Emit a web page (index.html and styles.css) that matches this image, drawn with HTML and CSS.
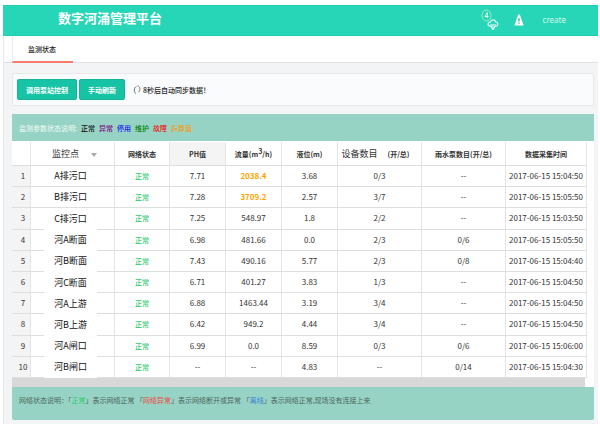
FILE: index.html
```
<!DOCTYPE html>
<html lang="zh-CN">
<head>
<meta charset="utf-8">
<title>数字河涌管理平台</title>
<link rel="stylesheet" href="styles.css">
</head>
<body>
<div class="app">
  <header class="topbar">
    <h1>数字河涌管理平台</h1>
    <nav class="tools">
      <a class="tool" href="#" aria-label="消息 4">
        <svg width="18" height="22" viewBox="0 0 18 22" fill="none">
          <ellipse cx="5.500" cy="6.500" rx="4.500" ry="5.500" stroke="#b5ecc8" stroke-width="0.900"/>
          <path d="M6.300 3.500 3.900 7.500h3.700M6.300 3.500v5.700" stroke="#e6fbf4" stroke-width="0.900"/>
          <path d="M9 17.200c-3-.5-2.300-4 .3-4 .8-3 4.800-3 5.400-.3 3 .4 2.700 4 .3 4.500" stroke="#d8f8ee" stroke-width="1.200"/>
          <path d="M10 15v3M12 15v4.500M14 15v3M9.700 17l2.300 4 2.300-4" stroke="#fff" stroke-width="1"/>
        </svg>
      </a>
      <a class="tool" href="#" aria-label="告警">
        <svg width="10" height="12" viewBox="0 0 10 12">
          <path d="M4.200.5h1.600L9.600 11.500H.4z" fill="#fff"/>
          <path d="M5 4v3.600M5 8.600v1.200" stroke="#24b59b" stroke-width="1.200"/>
        </svg>
      </a>
      <a class="user" href="#">create</a>
    </nav>
  </header>
  <div class="tabs"><a class="tab" href="#">监测状态</a></div>
  <main>
    <section class="panel">
      <button type="button">调用泵站控制</button>
      <button type="button">手动刷新</button>
      <svg class="sync" width="8" height="10" viewBox="0 0 8 10" fill="none" stroke="#777">
        <path d="M3.500 1.500C.5 2.500.8 7.500 3 8.800M4.500.8c3 .8 3 4.200 1 6.500"/>
      </svg>
      <span class="note">8秒后自动同步数据！</span>
    </section>
    <section class="legend">
      <span class="lead">监测参数状态说明:</span>
      <span class="c-normal">正常</span><span class="c-odd">异常</span><span class="c-stop">停用</span><span class="c-fix">维护</span><span class="c-fault">故障</span><span class="c-calc">折算值</span>
    </section>
    <div class="grid">
      <table>
        <colgroup><col class="w-no"><col class="w-name"><col class="w-net"><col class="w-val"><col class="w-val"><col class="w-val"><col class="w-num"><col class="w-num"><col class="w-time"></colgroup>
        <thead>
          <tr><th></th><th class="big point">监控点<i class="sort"></i></th><th>网络状态</th><th class="sorted">PH值</th><th>流量(m<sup>3</sup>/h)</th><th>液位(m)</th><th class="devices"><span class="big">设备数目</span><span class="unit">(开/总)</span></th><th>雨水泵数目(开/总)</th><th>数据采集时间</th></tr>
        </thead>
        <tbody>
          <tr><td>1</td><td>A排污口</td><td>正常</td><td>7.71</td><td class="warn">2038.4</td><td>3.68</td><td>0/3</td><td>--</td><td>2017-06-15 15:04:50</td></tr>
          <tr><td>2</td><td>B排污口</td><td>正常</td><td>7.28</td><td class="warn">3709.2</td><td>2.57</td><td>3/7</td><td>--</td><td>2017-06-15 15:05:50</td></tr>
          <tr><td>3</td><td class="open">C排污口</td><td>正常</td><td>7.25</td><td>548.97</td><td>1.8</td><td>2/2</td><td>--</td><td>2017-06-15 15:03:50</td></tr>
          <tr><td>4</td><td class="open">河A断面</td><td>正常</td><td>6.98</td><td>481.66</td><td>0.0</td><td>2/3</td><td>0/6</td><td>2017-06-15 15:05:50</td></tr>
          <tr><td>5</td><td class="open">河B断面</td><td>正常</td><td>7.43</td><td>490.16</td><td>5.77</td><td>2/3</td><td>0/8</td><td>2017-06-15 15:04:40</td></tr>
          <tr><td>6</td><td class="open">河C断面</td><td>正常</td><td>6.71</td><td>401.27</td><td>3.83</td><td>1/3</td><td>--</td><td>2017-06-15 15:04:50</td></tr>
          <tr><td>7</td><td class="open">河A上游</td><td>正常</td><td>6.88</td><td>1463.44</td><td>3.19</td><td>3/4</td><td>--</td><td>2017-06-15 15:04:50</td></tr>
          <tr><td>8</td><td class="open">河B上游</td><td>正常</td><td>6.42</td><td>949.2</td><td>4.44</td><td>3/4</td><td>--</td><td>2017-06-15 15:04:50</td></tr>
          <tr><td>9</td><td class="open">河A闸口</td><td>正常</td><td>6.99</td><td>0.0</td><td>8.59</td><td>0/3</td><td>0/6</td><td>2017-06-15 15:06:00</td></tr>
          <tr><td>10</td><td class="open">河B闸口</td><td>正常</td><td>--</td><td>--</td><td>4.83</td><td>--</td><td>0/14</td><td>2017-06-15 15:04:30</td></tr>
        </tbody>
      </table>
      <div class="scroll"></div>
    </div>
    <footer class="foot">网络状态说明：「<b class="ok">正常</b>」表示网络正常 「<b class="bad">网络异常</b>」表示网络断开或异常 「<b class="off">离线</b>」表示网络正常,现场没有连接上来</footer>
  </main>
</div>
</body>
</html>
```
FILE: styles.css
```
* { box-sizing: border-box; }
body {
  margin: 0;
  background: #fff;
  font: 7px/12px "Noto Sans CJK SC", sans-serif;
  color: #333;
}
a { color: inherit; text-decoration: none; }
.app { margin: 5px 2px 0 3px; min-height: calc(100vh - 5px); background: #f3f4f6; border-left: 1px solid #e6e7ea; }
.topbar {
  display: flex;
  align-items: center;
  justify-content: space-between;
  height: 31px;
  margin-left: -1px;
  padding: 0 32px 0 55px;
  background: #26d6b7;
  border-top: 1px solid #1fcfae;
  border-bottom: 1px solid #1fcfae;
  color: #fff;
}
h1 { margin: 0; padding-bottom: 6px; font-size: 13px; line-height: 20px; font-weight: 700; }
.tools { display: flex; align-items: center; padding-bottom: 2px; }
.tools svg { display: block; }
.tool { margin-right: 15px; }
.tool + .tool { margin-right: 19px; }
.user { font: 8px/12px "Noto Sans", sans-serif; color: #d9f8ef; }
.tabs { height: 27px; padding-left: 8px; background: #fff; border-bottom: 1px solid #dfe0e2; }
.tab {
  display: block;
  width: 61px;
  height: 27px;
  padding-left: 15px;
  line-height: 26px;
  font-weight: 500;
  color: #222;
  border-left: 1px solid #ececee;
  border-bottom: 2px solid #fa7a6c;
}
main { padding: 10px 4px 4px 8px; }
.panel {
  display: flex;
  align-items: center;
  height: 33px;
  padding: 0 4px;
  background: #fafbfd;
  border: 1px solid #e8e9eb;
  border-radius: 2px;
}
button {
  height: 21px;
  margin-right: 2px;
  padding: 0 8px;
  border: 1px solid #14b497;
  border-radius: 2px;
  background: #16c4a5;
  color: #fff;
  font: 700 7px/12px "Noto Sans CJK SC", sans-serif;
}
.sync { margin: 0 2px 0 6px; }
.note { color: #222; font-weight: 500; }
.legend {
  display: flex;
  align-items: center;
  gap: 4px;
  height: 27px;
  margin-top: 8px;
  padding-left: 7px;
  background: #96d3c4;
  font-weight: 500;
}
.lead { color: #f0faf7; font-weight: 400; }
.c-normal { color: #111; }
.c-odd { color: #800080; }
.c-stop { color: #1414f0; }
.c-fix { color: #008000; }
.c-fault { color: #f01010; }
.c-calc { color: #f0a020; }
.grid { background: #fff; padding: 1px 7px 0 0; }
table {
  width: 100%;
  height: 236px;
  table-layout: fixed;
  border-collapse: separate;
  border-spacing: 0;
}
.w-no { width: 19px; }
.w-name { width: 84px; }
.w-net { width: 55px; }
.w-val { width: 56px; }
.w-num { width: 84px; }
.w-time { width: 81px; }
th, td {
  padding: 0;
  text-align: center;
  vertical-align: middle;
  white-space: nowrap;
  border-right: 1px solid #e4e4e4;
  border-bottom: 1px solid #dedede;
}
thead tr { height: 24px; }
th { font-weight: 700; color: #333; }
td { font: 8px/12px "Noto Sans CJK SC", sans-serif; }
td:first-child { background: #f4f4f4; padding-left: 4px; }
td:nth-child(2) { font-size: 9px; color: #111; padding-right: 4px; }
td:nth-child(3) { font-size: 7px; font-weight: 500; color: #2ecc71; }
td.warn { color: #ffa500; font-weight: 700; }
td.open {
  border-bottom: 0;
  background: linear-gradient(to right, #dedede 13px, #fff 13px 66px, #dedede 66px) bottom / 100% 1px no-repeat;
}
.big { font-size: 9px; font-weight: 400; }
.point { padding-left: 4px; }
.devices { padding-right: 8px; }
.sorted { background: #f4f4f4; }
.sort {
  display: inline-block;
  margin-left: 12px;
  border: 3px solid transparent;
  border-top: 4px solid #aaa;
  border-bottom: 0;
}
.unit { margin-left: 10px; }
sup { font-size: 7px; line-height: 0; vertical-align: 3px; }
.scroll { height: 9px; margin-right: 2px; background: #d8d8d8; }
.foot {
  min-height: 33px;
  padding: 7px;
  background: #96d3c4;
  border-radius: 0 0 2px 2px;
  color: #4f6660;
  white-space: nowrap;
}
.foot b { font-weight: 400; }
.ok { color: #2ecc71; }
.bad { color: #f04848; }
.off { color: #3c84d8; }
```
